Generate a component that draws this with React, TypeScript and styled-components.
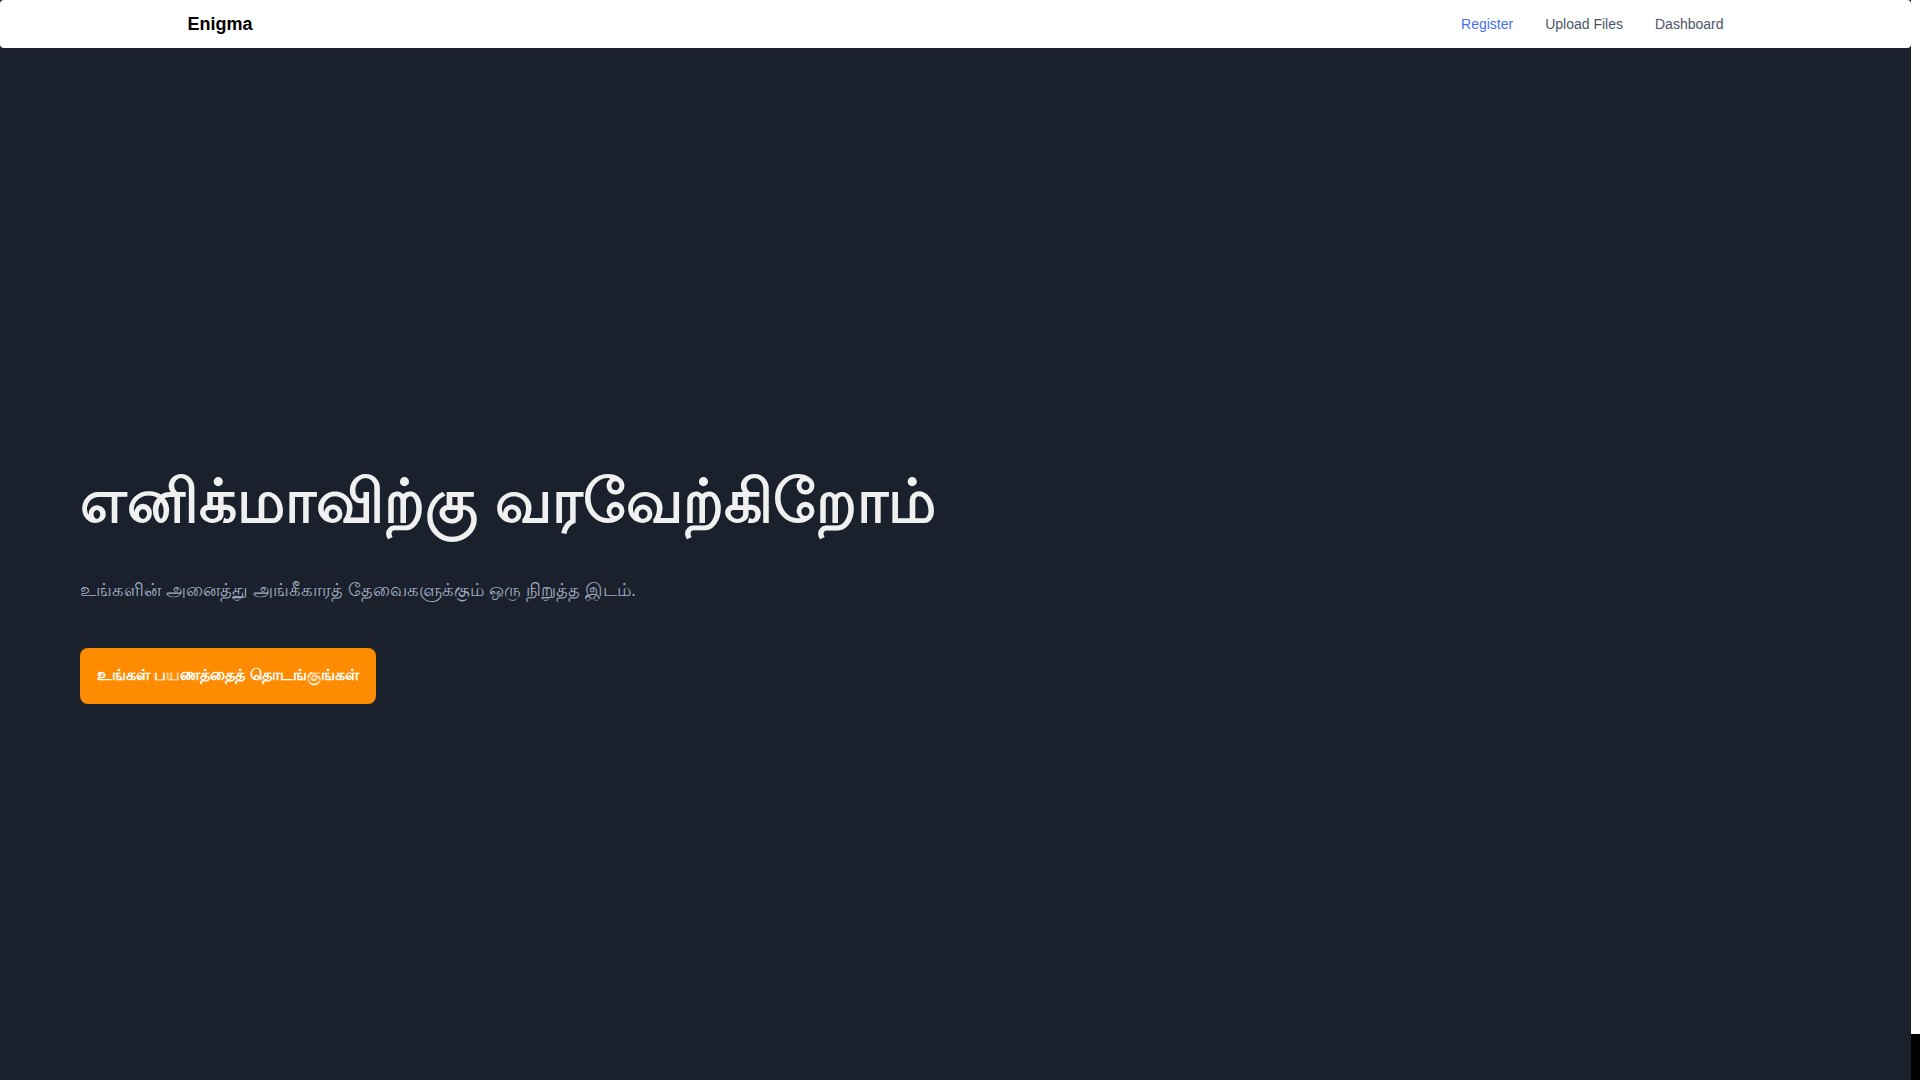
import React from "react";
import styled, { createGlobalStyle } from "styled-components";

const Global = createGlobalStyle`
  html, body {
    margin: 0;
    padding: 0;
    background: #ffffff;
    overflow: hidden;
  }
  body {
    font-family: "Liberation Sans", Arial, sans-serif;
  }
  * { box-sizing: border-box; }
`;

const Shell = styled.div`
  display: flex;
  width: 1920px;
  height: 1080px;
`;

const Page = styled.div`
  flex: 1;
  display: flex;
  flex-direction: column;
  background: #1a202c;
`;

const Rail = styled.div`
  width: 9px;
  display: flex;
  flex-direction: column;
  background: #ffffff;
`;

const RailThumb = styled.div`
  margin-top: auto;
  height: 46px;
  background: #000000;
`;

const NavBar = styled.nav`
  height: 48px;
  background: #ffffff;
  border-radius: 4px;
  display: flex;
  justify-content: center;
`;

const NavInner = styled.div`
  width: 1536px;
  display: flex;
  align-items: center;
  justify-content: space-between;
`;

const Brand = styled.a`
  font-size: 18px;
  font-weight: 700;
  color: #000000;
  text-decoration: none;
`;

const NavLinks = styled.div`
  display: flex;
  gap: 32px;
`;

const NavLink = styled.a<{ $active?: boolean }>`
  font-size: 14px;
  color: ${(p) => (p.$active ? "#4470ee" : "#4a5568")};
  text-decoration: none;
`;

const Hero = styled.section`
  flex: 1;
  display: flex;
  align-items: center;
  padding: 48px 80px 0;
`;

const HeroContent = styled.div`
  display: flex;
  flex-direction: column;
  align-items: flex-start;
`;

const Title = styled.h1`
  margin: 0;
  font-size: 60px;
  line-height: 1;
  font-weight: 700;
  color: #f0f0f0;
`;

const Subtitle = styled.p`
  margin: 44px 0 0;
  font-size: 18px;
  line-height: 28px;
  color: #a0aec0;
`;

const CTA = styled.button`
  margin-top: 44px;
  height: 56px;
  padding: 0 17px;
  border: none;
  border-radius: 8px;
  background: #ff8c00;
  color: #ffffff;
  font-family: "Liberation Sans", Arial, sans-serif;
  font-size: 16px;
  font-weight: 700;
  cursor: pointer;
`;

export default function App() {
  return (
    <>
      <Global />
      <Shell>
        <Page>
          <NavBar>
            <NavInner>
              <Brand href="#">Enigma</Brand>
              <NavLinks>
                <NavLink href="#" $active>Register</NavLink>
                <NavLink href="#">Upload Files</NavLink>
                <NavLink href="#">Dashboard</NavLink>
              </NavLinks>
            </NavInner>
          </NavBar>
          <Hero>
            <HeroContent>
              <Title>எனிக்மாவிற்கு வரவேற்கிறோம்</Title>
              <Subtitle>உங்களின் அனைத்து அங்கீகாரத் தேவைகளுக்கும் ஒரு நிறுத்த இடம்.</Subtitle>
              <CTA>உங்கள் பயணத்தைத் தொடங்குங்கள்</CTA>
            </HeroContent>
          </Hero>
        </Page>
        <Rail>
          <RailThumb />
        </Rail>
      </Shell>
    </>
  );
}
